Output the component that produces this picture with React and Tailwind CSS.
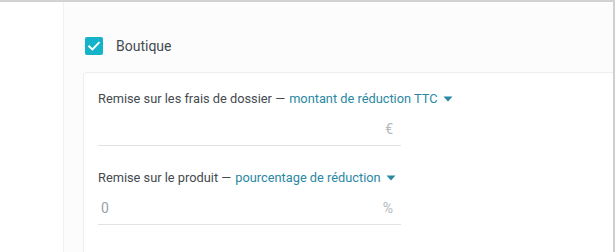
import React from "react";

function Caret() {
  return (
    <svg width="10" height="6" viewBox="0 0 10 6" className="ml-[5px] shrink-0">
      <path d="M0.5 0.5 L9.5 0.5 L5 5.5 Z" fill="#2a88a3" />
    </svg>
  );
}

function Field({ label, link, value, unit }) {
  return (
    <div className="w-[303px]">
      <div className="h-[16px] flex items-center text-[12.8px] leading-[16px] text-[#454a4f] whitespace-nowrap">
        <span className="shrink-0">{label} — </span>
        <span className="ml-[4px] shrink-0 text-[#2a88a3]">{link}</span>
        <Caret />
      </div>
      <div className="mt-[6px] h-[33px] flex items-center justify-between border-b border-[#e3e3e3] pl-[3px] pr-[8px] text-[14px] text-[#b3b8bc]">
        <span className="text-[#9aa3aa]">{value}</span>
        <span>{unit}</span>
      </div>
    </div>
  );
}

export default function App() {
  return (
    <div
      className="w-[615px] h-[252px] bg-white flex border-t-2 border-[#d2d2d2] overflow-hidden"
      style={{ fontFamily: "Roboto, 'Liberation Sans', sans-serif" }}
    >
      <div className="w-[63px] shrink-0" />
      <div className="flex-1 flex flex-col border-l border-[#f1f1f1] border-r-2 border-r-[#cfcfcf] bg-[#fcfcfc]">
        <div className="pl-[21px] pt-[35px] flex items-center h-[53px]">
          <div className="w-[18px] h-[18px] rounded-[2px] bg-[#14b3c9] flex items-center justify-center">
            <svg width="14" height="14" viewBox="0 0 14 14">
              <path d="M2.2 7.4 L5.4 10.4 L11.8 3.8" fill="none" stroke="white" strokeWidth="2" strokeLinecap="square" />
            </svg>
          </div>
          <span className="ml-[13px] text-[14px] text-[#454a4f]">Boutique</span>
        </div>
        <div className="ml-[19px] mt-[17px] flex-1 bg-white border-l border-t border-[#eeeeee] rounded-tl-[4px] pl-[14px] pt-[18px] flex flex-col gap-[24px]">
          <Field label="Remise sur les frais de dossier" link="montant de réduction TTC" value="" unit="€" />
          <Field label="Remise sur le produit" link="pourcentage de réduction" value="0" unit="%" />
        </div>
      </div>
    </div>
  );
}
